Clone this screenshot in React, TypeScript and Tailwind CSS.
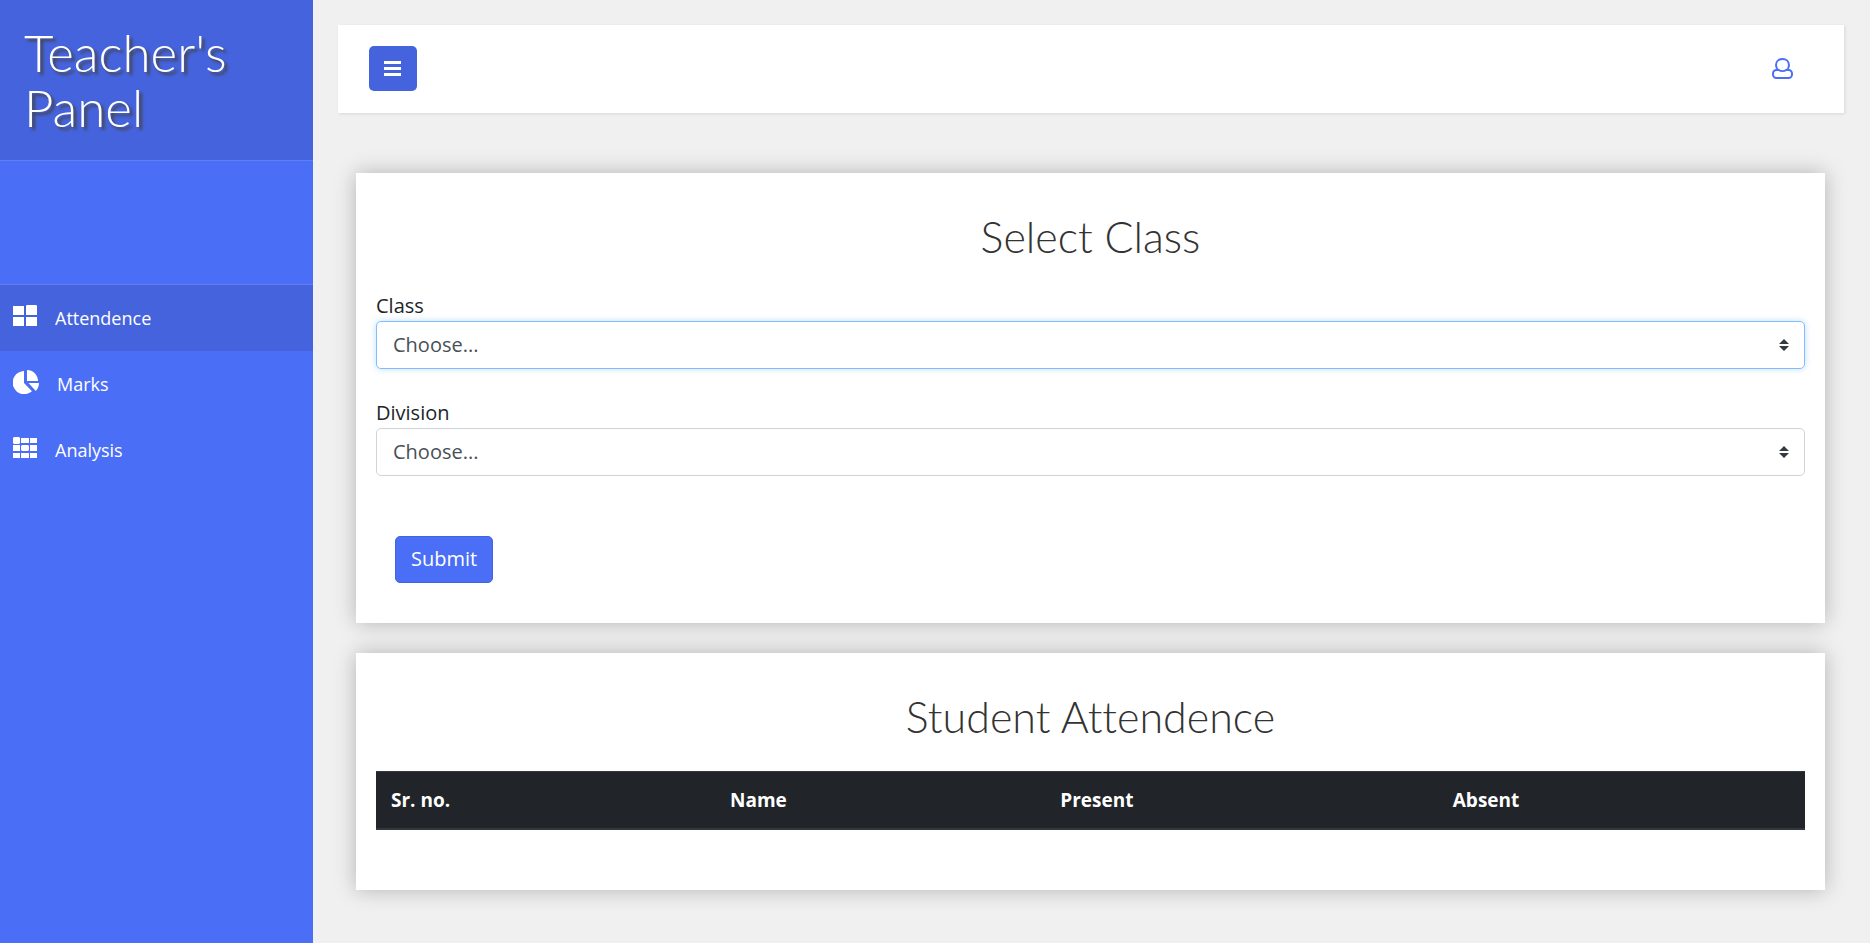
import type { ReactNode } from 'react';

const GridIcon = () => (
  <svg viewBox="0 0 24 21" className="h-[21px] w-6" fill="currentColor" aria-hidden="true">
    <path d="M0 1h11v9H0zM13 .8l.8-.8h9.4l.8.8V10H13zM0 12h11v9H0zM13 12h11v9H13z" />
  </svg>
);

const PieIcon = () => (
  <svg viewBox="0 0 26 24" className="h-6 w-[26px]" fill="currentColor" aria-hidden="true">
    <path d="M11 1v12l8 8.2A11.6 11.6 0 1 1 11 1z" />
    <path d="M14 0a11.2 11.2 0 0 1 11 11H14z" />
    <path d="M15.5 13H26a11.5 11.5 0 0 1-3.2 8z" />
  </svg>
);

const TableIcon = () => (
  <svg viewBox="0 0 24 21" className="h-[21px] w-6" fill="currentColor" aria-hidden="true">
    <path d="M0 1l1-1h5l1 1v5L6 7H1L0 6zM8 1h8v5H8zM17 1h7v5h-7zM0 8h7v6H0zM9 8h6l1 1v4l-1 1H9l-1-1V9zM17 8h7v6h-7zM0 16h7v5H0zM8 16h8v5H8zM17 16h7v5h-7z" />
  </svg>
);

const UserIcon = () => (
  <svg viewBox="0 0 21 21" className="h-[21px] w-[21px]" fill="none" stroke="currentColor" strokeWidth="2" aria-hidden="true">
    <path d="M6.6 12.2C5 11 4 9.2 4 7.2 4 3.6 6.8 1 10.5 1S17 3.6 17 7.2c0 2-1 3.8-2.6 5" />
    <path d="M4.5 12h2.3c2 1.4 5.4 1.4 7.4 0h2.3A3.5 3.5 0 0 1 20 15.5v1a3.5 3.5 0 0 1-3.5 3.5h-12A3.5 3.5 0 0 1 1 16.500v-1A3.500 3.500 0 0 1 4.500 12z" />
  </svg>
);

const SortIcon = () => (
  <svg viewBox="0 0 10 12" className="pointer-events-none absolute top-1/2 right-4 h-3 w-[10px] -translate-y-1/2" fill="#343a40" aria-hidden="true">
    <path d="M5 0l5 5H0zM5 12L0 7h10z" />
  </svg>
);

const navItems = [
  { label: 'Attendence', icon: <GridIcon />, active: true },
  { label: 'Marks', icon: <PieIcon />, active: false },
  { label: 'Analysis', icon: <TableIcon />, active: false },
];

function Card({ title, children }: { title: string; children: ReactNode }) {
  return (
    <section className="bg-white px-5 shadow-[0_0_20px_rgba(0,0,0,0.25)]">
      <h2 className="pt-[39px] pb-[29px] text-center font-[Lato] text-[43px] leading-[50px] font-light text-[#333] [font-variant-ligatures:none]">{title}</h2>
      {children}
    </section>
  );
}

function SelectField({ id, label, focused = false }: { id: string; label: string; focused?: boolean }) {
  return (
    <div>
      <label htmlFor={id} className="block pt-px pb-[2px] leading-[26px] text-[#212529]">{label}</label>
      <div className="relative">
        <select
          id={id}
          className={
            focused
              ? 'h-12 w-full appearance-none rounded-[5px] border border-[#80bdff] bg-white px-4 pb-px text-[#495057] shadow-[0_0_6px_rgba(128,189,255,0.5)] outline-none'
              : 'h-12 w-full appearance-none rounded-[5px] border border-[#ced4da] bg-white px-4 pb-px text-[#495057] outline-none'
          }
        >
          <option>Choose...</option>
        </select>
        <SortIcon />
      </div>
    </div>
  );
}

export default function App() {
  return (
    <div className="flex min-h-screen bg-[#f0f0f0] font-['Open_Sans',sans-serif] text-xl">
      <aside className="w-[313px] shrink-0 bg-[#4a6ef5] text-white">
        <header className="border-b border-[#5f7ff7] bg-[#4563dd] px-6 py-[25px]">
          <h1 className="font-[Lato] text-[51px] leading-[55px] font-light [text-shadow:3px_3px_3px_#444]">
            Teacher's
            <br />
            Panel
          </h1>
        </header>
        <nav className="mt-[123px] border-t border-[#5f7ff7]">
          <ul>
            {navItems.map((item) => (
              <li key={item.label}>
                <a
                  href="#"
                  className={
                    item.active
                      ? 'flex h-[66px] items-center gap-[18px] bg-[#4563dd] px-[13px] text-lg'
                      : 'flex h-[66px] items-center gap-[18px] px-[13px] text-lg'
                  }
                >
                  <span className="pb-[5px]">{item.icon}</span>
                  {item.label}
                </a>
              </li>
            ))}
          </ul>
        </nav>
      </aside>

      <main className="min-w-0 flex-1 pt-[25px] pr-[26px] pl-[25px]">
        <div className="flex h-22 items-center justify-between bg-white pr-[51px] pb-[2px] pl-[31px] shadow-[1px_1px_3px_rgba(0,0,0,0.1)]">
          <button type="button" aria-label="Toggle sidebar" className="flex h-[45px] w-12 items-center justify-center rounded-[5px] bg-[#4563dd] pr-px text-white">
            <svg viewBox="0 0 17 15" className="h-[15px] w-[17px]" fill="currentColor" aria-hidden="true">
              <path d="M0 0h17v3H0zM0 6h17v3H0zM0 12h17v3H0z" />
            </svg>
          </button>
          <a href="#" aria-label="Account" className="text-[#4a6ef5]">
            <UserIcon />
          </a>
        </div>

        <div className="mt-15 mb-10 flex flex-col gap-[30px] pr-[19px] pl-[18px]">
          <Card title="Select Class">
            <form className="pt-px pb-10" onSubmit={(e) => e.preventDefault()}>
              <div className="flex flex-col gap-[30px]">
                <SelectField id="class" label="Class" focused />
                <SelectField id="division" label="Division" />
              </div>
              <button type="submit" className="mt-[60px] ml-[19px] h-[47px] rounded-[5px] border border-[#4563dd] bg-[#4a6ef5] px-[15px] pb-[2px] text-white">
                Submit
              </button>
            </form>
          </Card>

          <Card title="Student Attendence">
            <div className="pb-[60px]">
              <table className="w-full bg-[#212529] text-left text-[19px] font-semibold text-white">
                <thead>
                  <tr className="border-t border-b-2 border-t-[#32383e] border-b-[#32383e]">
                    <th className="px-[15px] py-[14px] leading-7">Sr. no.</th>
                    <th className="px-[15px] py-[14px] leading-7">Name</th>
                    <th className="px-[15px] py-[14px] leading-7">Present</th>
                    <th className="px-[15px] py-[14px] leading-7">Absent</th>
                  </tr>
                </thead>
              </table>
            </div>
          </Card>
        </div>
      </main>
    </div>
  );
}
